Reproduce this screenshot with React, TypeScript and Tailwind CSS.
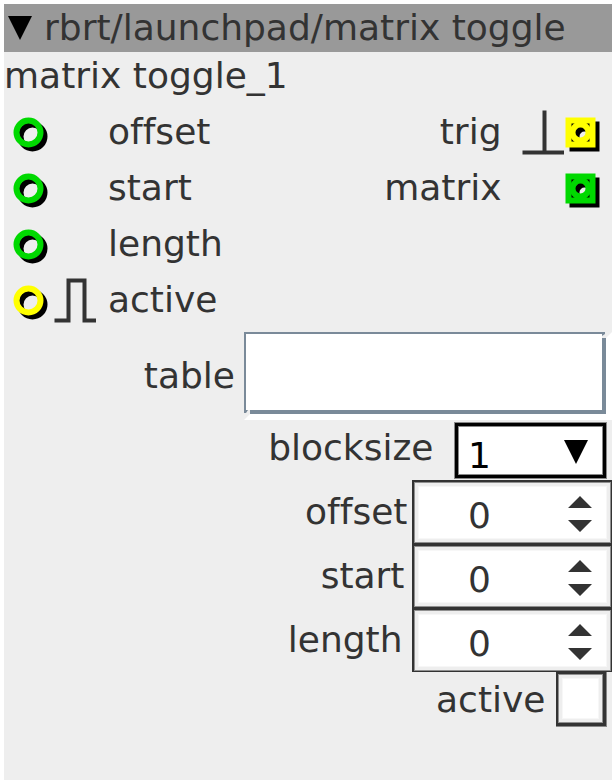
import React from "react";

const GREEN = "#00d900";
const YELLOW = "#ffff00";

function Inlet({ color }: { color: string }) {
  return (
    <svg width="40" height="56" viewBox="0 0 40 56" fill="none" strokeWidth="6">
      <circle cx="24.5" cy="32.5" r="12" stroke="#000" />
      <circle cx="20.5" cy="28.5" r="12" stroke={color} />
    </svg>
  );
}

function Outlet({ color }: { color: string }) {
  return (
    <svg width="48" height="56" viewBox="0 0 48 56" fill="none" strokeWidth="6">
      <g stroke="#000">
        <rect x="8.5" y="20.5" width="24" height="24" />
        <circle cx="20.5" cy="32.5" r="8" />
      </g>
      <path d="M8 20h4v4h-4zM21 20h4v4h-4zM8 33h4v4h-4zM21 33h4v4h-4z" fill="#000" />
      <g stroke={color}>
        <rect x="4.5" y="16.5" width="24" height="24" />
        <circle cx="16.5" cy="28.5" r="8" />
      </g>
    </svg>
  );
}

function GateIcon() {
  return (
    <svg width="56" height="56" viewBox="0 0 56 56" fill="none" stroke="#333" strokeWidth="4" strokeLinecap="square">
      <path d="M8.5 48.5H20.5V8.5H36.5V48.5H46" />
    </svg>
  );
}

function TrigIcon() {
  return (
    <svg width="64" height="56" viewBox="0 0 64 56" fill="none" stroke="#333" strokeWidth="4" strokeLinecap="square">
      <path d="M24.5 48.5H62M44.5 8.5V48.5" />
    </svg>
  );
}

function PortRow({ label, color, gate, children }: { label: string; color: string; gate?: boolean; children?: React.ReactNode }) {
  return (
    <div className="flex h-14">
      <div className="ml-1 w-10">
        <Inlet color={color} />
      </div>
      <div className="w-[60px]">{gate && <GateIcon />}</div>
      <span>{label}</span>
      {children}
    </div>
  );
}

function Spinner() {
  return (
    <div className="h-16 w-[200px] border-t-2 border-r border-b border-l-2 border-[#333] bg-[#eee]">
      <div className="h-full border border-[#909090] p-[3px]">
        <div className="flex h-full items-start border border-[#f7f7f7] bg-white">
          <span className="ml-[49px] h-[50px] leading-[58px]">0</span>
          <svg className="mt-[9px] mr-3.5 ml-auto" width="24" height="36" viewBox="0 0 24 36" fill="#333">
            <path d="M12 0L24 12H0ZM0 24H24L12 36Z" />
          </svg>
        </div>
      </div>
    </div>
  );
}

function SpinnerRow({ label, gap }: { label: string; gap: string }) {
  return (
    <div className="flex h-16 justify-end">
      <span className={"leading-[64px] " + gap}>{label}</span>
      <Spinner />
    </div>
  );
}

export default function App() {
  return (
    <div className="h-[784px] w-[616px] bg-white p-1">
      <div className="h-[776px] bg-[#eee] font-['DejaVu_Sans',sans-serif] text-4xl leading-[56px] whitespace-nowrap text-[#333] [font-variant-ligatures:none]">
        <div className="flex h-12 items-center bg-[#999] leading-[48px]">
          <svg className="ml-1" width="24" height="24" viewBox="0 0 24 24">
            <path d="M0 0H24L12 24Z" />
          </svg>
          <span className="ml-3">rbrt/launchpad/matrix toggle</span>
        </div>
        <div className="mb-1 h-12 leading-[48px]">matrix toggle_1</div>

        <PortRow label="offset" color={GREEN}>
          <span className="ml-auto">trig</span>
          <div className="ml-[-1.5px] flex">
            <TrigIcon />
            <Outlet color={YELLOW} />
          </div>
        </PortRow>
        <PortRow label="start" color={GREEN}>
          <span className="mr-[110.5px] ml-auto">matrix</span>
          <div className="ml-[-110px] flex pl-[62px]">
            <Outlet color={GREEN} />
          </div>
        </PortRow>
        <PortRow label="length" color={GREEN} />
        <PortRow label="active" color={YELLOW} gate />

        <div className="mt-1 flex h-[88px] justify-end">
          <span className="mr-[9px] leading-[88px]">table</span>
          <div className="relative h-[88px] w-[368px] bg-white pr-1.5 pb-1.5">
            <div className="h-full border-t-2 border-r-4 border-b-4 border-l-2 border-[#7a8a99]" />
            <svg className="absolute inset-0" width="368" height="88" viewBox="0 0 368 88" fill="#eee">
              <path d="M361 0H368L362 6H358V4L361 2Z" />
              <path d="M0 81H2L4 78H6V82L0 88Z" />
            </svg>
          </div>
        </div>

        <div className="flex h-[60px] justify-end pt-0.5 pr-[5px]">
          <span className="mr-[20.5px] leading-[52px]">blocksize</span>
          <div className="h-[57px] w-[153px] border border-[#888]">
            <div className="h-full border-[3px] border-black">
              <div className="flex h-full items-center border border-[#888] bg-white text-black">
                <span className="ml-[9px] pt-2.5 leading-[50px]">1</span>
                <svg className="mt-[3px] mr-3.5 ml-auto" width="24" height="24" viewBox="0 0 24 24">
                  <path d="M0 0H24L12 24Z" />
                </svg>
              </div>
            </div>
          </div>
        </div>

        <SpinnerRow label="offset" gap="mr-[4.5px]" />
        <SpinnerRow label="start" gap="mr-[7.5px]" />
        <SpinnerRow label="length" gap="mr-[9.5px]" />

        <div className="flex justify-end pr-[5px]">
          <span className="mr-[10.5px]">active</span>
          <div className="h-[55px] w-[51px] border-r border-b border-[#888]">
            <div className="h-full border-t-2 border-r-[3px] border-b-[3px] border-l-2 border-[#333] bg-[#eee]">
              <div className="h-full border border-[#909090] p-[3px]">
                <div className="h-full border border-[#f7f7f7] bg-white" />
              </div>
            </div>
          </div>
        </div>
      </div>
    </div>
  );
}
